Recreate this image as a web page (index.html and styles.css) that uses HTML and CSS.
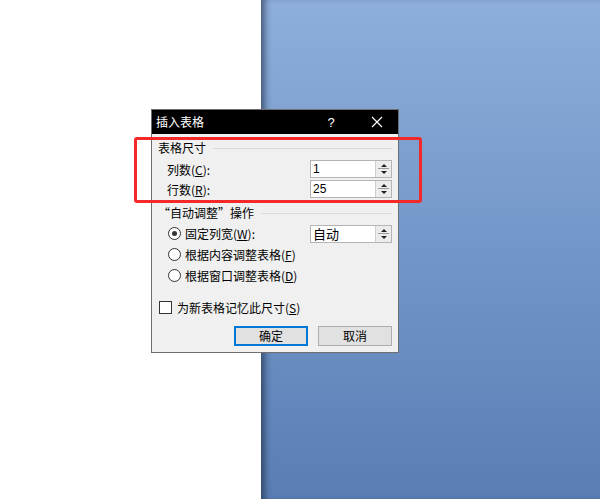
FILE: index.html
```html
<!DOCTYPE html>
<html lang="zh-CN">
<head>
<meta charset="utf-8">
<title>插入表格</title>
<link rel="stylesheet" href="styles.css">
</head>
<body>
<div class="screen">
  <div class="page"></div>
  <div class="desk"></div>

  <div class="dialog">
    <div class="titlebar">
      <span class="title">插入表格</span>
      <span class="help">?</span>
      <span class="close">
        <svg width="12" height="12" viewBox="0 0 12 12"><path d="M1 1 L11 11 M11 1 L1 11" stroke="#fff" stroke-width="1.2" fill="none"/></svg>
      </span>
    </div>
    <div class="body">
      <div class="group-head"><span>表格尺寸</span><i class="rule"></i></div>
      <div class="field">
        <span class="lbl">列数(<u>C</u>):</span>
        <div class="spin"><span class="val">1</span><span class="arrows"><i class="up"></i><i class="down"></i></span></div>
      </div>
      <div class="field">
        <span class="lbl">行数(<u>R</u>):</span>
        <div class="spin"><span class="val">25</span><span class="arrows"><i class="up"></i><i class="down"></i></span></div>
      </div>

      <div class="group-head second"><span>“自动调整”操作</span><i class="rule"></i></div>
      <div class="options">
        <div class="opt">
          <span class="radio checked"></span><span class="lbl">固定列宽(<u>W</u>):</span>
          <div class="spin"><span class="val cjk">自动</span><span class="arrows"><i class="up"></i><i class="down"></i></span></div>
        </div>
        <div class="opt">
          <span class="radio"></span><span class="lbl">根据内容调整表格(<u>F</u>)</span>
        </div>
        <div class="opt">
          <span class="radio"></span><span class="lbl">根据窗口调整表格(<u>D</u>)</span>
        </div>
      </div>

      <div class="check-row"><span class="box"></span><span class="lbl">为新表格记忆此尺寸(<u>S</u>)</span></div>

      <div class="buttons">
        <span class="btn default">确定</span>
        <span class="btn">取消</span>
      </div>
    </div>
  </div>

  <div class="mark"></div>
</div>
</body>
</html>
```
FILE: styles.css
```css
html, body {
  margin: 0;
  padding: 0;
}
body {
  font-family: "Noto Sans CJK SC", "Liberation Sans", sans-serif;
  font-size: 12px;
  color: #000;
}
.screen {
  position: relative;
  width: 600px;
  height: 499px;
  display: flex;
  overflow: hidden;
}
.page {
  width: 261px;
  background: #fff;
}
.desk {
  flex: 1;
  background: linear-gradient(180deg, #8eafdb 0%, #7396c9 50%, #5a7eb4 100%);
  box-shadow: inset 7px 0 6px -3px rgba(20, 30, 50, 0.55);
}

/* dialog window */
.dialog {
  position: absolute;
  left: 151px;
  top: 109px;
  width: 246px;
  height: 242px;
  border: 1px solid #6f6f6f;
  background: #f0f0f0;
  display: flex;
  flex-direction: column;
}
.titlebar {
  height: 24px;
  background: #000;
  color: #fff;
  display: flex;
  align-items: center;
  padding-left: 4px;
}
.title {
  flex: 1;
  font-size: 12px;
  line-height: 24px;
}
.help {
  width: 14px;
  font-family: "Liberation Sans", sans-serif;
  font-size: 13px;
  margin-right: 29px;
  text-align: center;
}
.close {
  width: 20px;
  margin-right: 11px;
  display: flex;
  justify-content: center;
}
.close svg { display: block; }

.body {
  flex: 1;
  padding: 6px 6px 6px 6px;
  display: flex;
  flex-direction: column;
}
.group-head {
  height: 16px;
  line-height: 16px;
  display: flex;
  align-items: center;
  gap: 7px;
  white-space: nowrap;
}
.group-head.second {
  margin-top: 7px;
}
.rule {
  flex: 1;
  height: 1px;
  background: #dadada;
}
u { text-decoration: underline; text-underline-offset: 1px; }

.field {
  height: 18px;
  margin-top: 2px;
  padding-left: 9px;
  display: flex;
  align-items: center;
  justify-content: space-between;
}
.group-head + .field { margin-top: 4px; }

.spin {
  width: 80px;
  height: 16px;
  border: 1px solid #b4b4b4;
  background: #fff;
  display: flex;
  align-items: stretch;
}
.val {
  flex: 1;
  padding-left: 2px;
  font-family: "Liberation Sans", sans-serif;
  font-size: 12px;
  line-height: 16px;
}
.val.cjk {
  font-family: "Noto Sans CJK SC", sans-serif;
  font-size: 13px;
}
.arrows {
  width: 15px;
  border-left: 1px solid #cfcfcf;
  background: #ececec;
  display: flex;
  flex-direction: column;
  align-items: center;
  justify-content: center;
  gap: 2px;
  position: relative;
}
.arrows::after {
  content: "";
  position: absolute;
  left: 2px;
  right: 2px;
  top: 7px;
  height: 1px;
  background: #9a9a9a;
}
.arrows .up, .arrows .down {
  width: 0;
  height: 0;
  border-left: 3px solid transparent;
  border-right: 3px solid transparent;
}
.arrows .up { border-bottom: 3px solid #222; margin-bottom: 1px; }
.arrows .down { border-top: 3px solid #222; margin-top: 1px; }

.options {
  margin-top: 2px;
  display: flex;
  flex-direction: column;
}
.opt {
  height: 21px;
  display: flex;
  align-items: center;
  padding-left: 10px;
}
.opt .lbl { flex: 1; }
.radio {
  width: 11px;
  height: 11px;
  border: 1px solid #333;
  border-radius: 50%;
  background: #fff;
  margin-right: 4px;
  display: flex;
  align-items: center;
  justify-content: center;
}
.radio.checked::after {
  content: "";
  width: 5px;
  height: 5px;
  border-radius: 50%;
  background: #333;
}

.check-row {
  height: 18px;
  margin-top: 12px;
  display: flex;
  align-items: center;
  padding-left: 1px;
}
.box {
  width: 11px;
  height: 11px;
  border: 1px solid #333;
  background: #fff;
  margin-right: 5px;
}

.buttons {
  margin-top: 10px;
  display: flex;
  justify-content: flex-end;
  gap: 10px;
}
.btn {
  width: 72px;
  height: 18px;
  border: 1px solid #adadad;
  background: #e1e1e1;
  text-align: center;
  line-height: 18px;
}
.btn.default {
  border: 1px solid #0078d7;
  box-shadow: inset 0 0 0 1px #0078d7;
}

/* red annotation */
.mark {
  position: absolute;
  left: 134px;
  top: 137px;
  width: 282px;
  height: 60px;
  border: 3px solid #f42a2a;
  border-radius: 3px;
}
```
